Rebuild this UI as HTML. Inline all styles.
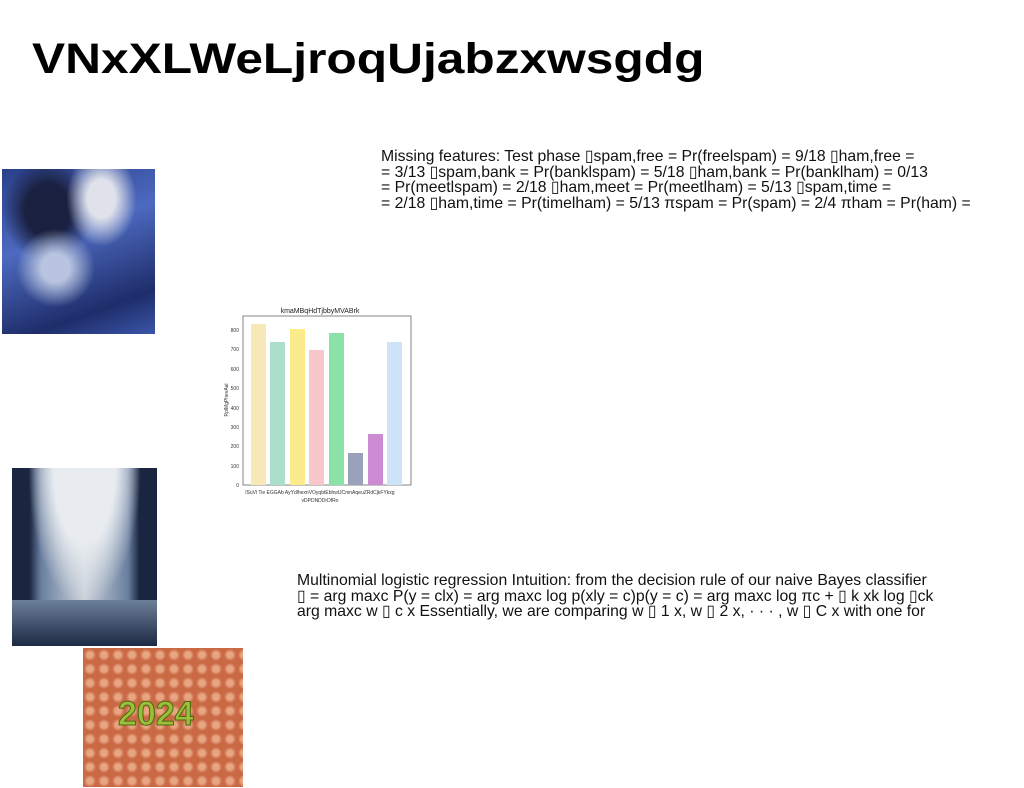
<!DOCTYPE html>
<html><head><meta charset="utf-8"><style>
body{margin:0;width:1024px;height:788px;background:#fff;position:relative;overflow:hidden;font-family:"Liberation Sans",sans-serif;}
.t{position:absolute;left:32px;top:38px;line-height:43px;font-weight:bold;font-size:43px;color:#000;white-space:nowrap;transform:scaleX(1.155);transform-origin:left}
.p{position:absolute;font-size:16px;line-height:15.6px;color:#111;white-space:nowrap;transform-origin:left top}
.img{position:absolute}
</style></head><body>
<div class="t">VNxXLWeLjroqUjabzxwsgdg</div>
<div class="p" style="left:381px;top:149px;transform:scaleX(0.985)">Missing features: Test phase ▯spam,free = Pr(freelspam) = 9/18 ▯ham,free =<br>= 3/13 ▯spam,bank = Pr(banklspam) = 5/18 ▯ham,bank = Pr(banklham) = 0/13<br>= Pr(meetlspam) = 2/18 ▯ham,meet = Pr(meetlham) = 5/13 ▯spam,time =<br>= 2/18 ▯ham,time = Pr(timelham) = 5/13 πspam = Pr(spam) = 2/4 πham = Pr(ham) =</div>
<div class="p" style="left:297px;top:573px;transform:scaleX(0.985)">Multinomial logistic regression Intuition: from the decision rule of our naive Bayes classifier<br>▯ = arg maxc P(y = clx) = arg maxc log p(xly = c)p(y = c) = arg maxc log πc + ▯ k xk log ▯ck<br>arg maxc w ▯ c x Essentially, we are comparing w ▯ 1 x, w ▯ 2 x, · · · , w ▯ C x with one for</div>
<div class="img" style="left:2px;top:169px;width:153px;height:165px;background:radial-gradient(ellipse at 35% 60%,#b8c4e0 0 10%,transparent 28%),radial-gradient(ellipse at 65% 18%,#dfe2ea 0 10%,transparent 25%),radial-gradient(ellipse at 30% 25%,#1a2040 0 15%,transparent 30%),linear-gradient(160deg,#2a3f8a,#4d6ac0 40%,#1e2d6a 80%,#3a55a8)"></div>
<div class="img" style="left:12px;top:468px;width:145px;height:178px;background:radial-gradient(ellipse at 50% 0%,#e8ecf0 0 30%,transparent 55%),linear-gradient(90deg,#1a2540 0 12%,#6a7fa0 20%,#c8d0d8 50%,#6a7fa0 80%,#1a2540 88%),#334"></div>
<div class="img" style="left:12px;top:600px;width:145px;height:46px;background:linear-gradient(180deg,#6c7f99,#1d2a44)"></div>
<div class="img" style="left:83px;top:648px;width:160px;height:139px;background:radial-gradient(circle at 50% 50%,#e8a582 0 30%,#c96a45 60%),#d88560;background-size:14px 14px"></div>
<div class="img" style="left:118px;top:695px;font-weight:bold;font-size:34px;color:#9bbf3a;-webkit-text-stroke:1px #4a6a10">2024</div>
<svg class="img" style="left:220px;top:300px" width="200" height="220" font-family="Liberation Sans" >
<text x="100" y="13" font-size="7" text-anchor="middle" fill="#222">kmaMBqHdTjbbyMVABrk</text>
<rect x="23" y="16" width="168" height="169" fill="none" stroke="#666" stroke-width="0.8"/>
<g font-size="5" fill="#333" text-anchor="end">
<text x="19" y="187">0</text><text x="19" y="168">100</text><text x="19" y="148">200</text><text x="19" y="129">300</text><text x="19" y="110">400</text><text x="19" y="90">500</text><text x="19" y="71">600</text><text x="19" y="51">700</text><text x="19" y="32">800</text></g>
<text x="8" y="100" font-size="5" fill="#333" transform="rotate(-90 8 100)" text-anchor="middle">RplMgPhevAal</text>
<rect x="31" y="24" width="15" height="161" fill="#f7e8b8"/>
<rect x="50" y="42" width="15" height="143" fill="#abdfca"/>
<rect x="70" y="29" width="15" height="156" fill="#fbeb8d"/>
<rect x="89" y="50" width="15" height="135" fill="#f8c7cc"/>
<rect x="109" y="33" width="15" height="152" fill="#8ae2a8"/>
<rect x="128" y="153" width="15" height="32" fill="#9aa2ba"/>
<rect x="148" y="134" width="15" height="51" fill="#cc8bd2"/>
<rect x="167" y="42" width="15" height="143" fill="#cfe3f8"/>
<text x="100" y="194" font-size="5" fill="#333" text-anchor="middle">lSuVl Tie EGGAb AyYdlhexnVOyqbtEbhwlJCmnAqeuZRdCjkFYkxg</text>
<text x="100" y="202" font-size="5" fill="#333" text-anchor="middle">vDPDNDDrDfRo</text>
</svg>
</body></html>
